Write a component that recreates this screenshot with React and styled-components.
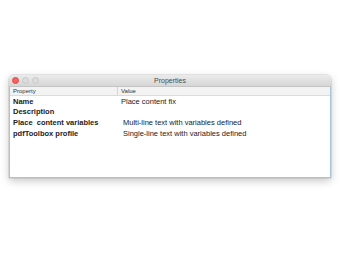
import React from 'react';
import styled, { createGlobalStyle } from 'styled-components';

const GlobalStyle = createGlobalStyle`
  html, body {
    margin: 0;
    padding: 0;
    background: #ffffff;
    font-family: "Liberation Sans", Arial, sans-serif;
  }
`;

const Page = styled.div`
  width: 340px;
  height: 260px;
  padding: 75px 9px 0 9px;
  box-sizing: border-box;
`;

const Window = styled.div`
  width: 322px;
  height: 103px;
  display: flex;
  flex-direction: column;
  background: #fff;
  border-radius: 4px 4px 0 0;
  box-shadow: 0 3px 8px rgba(0, 0, 0, 0.22), 0 0 0 0.5px rgba(0, 0, 0, 0.15);
  overflow: hidden;
`;

const TitleBar = styled.div`
  height: 11px;
  flex: none;
  display: flex;
  align-items: center;
  position: relative;
  background: linear-gradient(#ebebeb, #d6d6d6);
  border-bottom: 1px solid #c4c4c4;
`;

const Lights = styled.div`
  display: flex;
  gap: 3px;
  padding-left: 3px;
`;

const Light = styled.span`
  width: 7px;
  height: 7px;
  border-radius: 50%;
  background: ${(p) => p.$color};
  border: 0.5px solid ${(p) => p.$edge};
  box-sizing: border-box;
`;

const Title = styled.div`
  position: absolute;
  left: 0;
  right: 0;
  text-align: center;
  font-size: 7px;
  color: #4a4a4a;
`;

const Body = styled.div`
  flex: 1;
  border: 1px solid #a9c3df;
  border-top: none;
  display: flex;
  flex-direction: column;
`;

const HeaderRow = styled.div`
  display: grid;
  grid-template-columns: 107px 1fr;
  height: 8px;
  background: #f3f3f3;
  border-bottom: 1px solid #dcdcdc;
  font-size: 6px;
  color: #333;
  align-items: center;
`;

const HeadCell = styled.div`
  padding-left: 3px;
  height: 100%;
  display: flex;
  align-items: center;
  border-left: ${(p) => (p.$sep ? '1px solid #d4d4d4' : 'none')};
`;

const Row = styled.div`
  display: grid;
  grid-template-columns: 107px 1fr;
  height: ${(p) => p.$h}px;
  align-items: center;
`;

const Key = styled.div`
  padding-left: 3px;
  font-size: 7.5px;
  font-weight: bold;
  color: #222;
  white-space: pre;
`;

const Val = styled.div`
  padding-left: ${(p) => p.$pad}px;
  font-size: 7.5px;
  color: #222;
`;

const rows = [
  { k: 'Name', v: 'Place content fix', pad: 4, h: 10 },
  { k: 'Description', v: '', pad: 4, h: 11 },
  { k: 'Place  content variables', v: 'Multi-line text with variables defined', pad: 6, h: 11 },
  { k: 'pdfToolbox profile', v: 'Single-line text with variables defined', pad: 6, h: 10 },
];

export default function App() {
  return (
    <Page>
      <GlobalStyle />
      <Window>
        <TitleBar>
          <Lights>
            <Light $color="#fc605c" $edge="#de4a46" />
            <Light $color="#dcdcdc" $edge="#c8c8c8" />
            <Light $color="#dcdcdc" $edge="#c8c8c8" />
          </Lights>
          <Title>Properties</Title>
        </TitleBar>
        <Body>
          <HeaderRow>
            <HeadCell>Property</HeadCell>
            <HeadCell $sep>Value</HeadCell>
          </HeaderRow>
          {rows.map((r) => (
            <Row key={r.k} $h={r.h}>
              <Key>{r.k}</Key>
              <Val $pad={r.pad}>{r.v}</Val>
            </Row>
          ))}
        </Body>
      </Window>
    </Page>
  );
}
